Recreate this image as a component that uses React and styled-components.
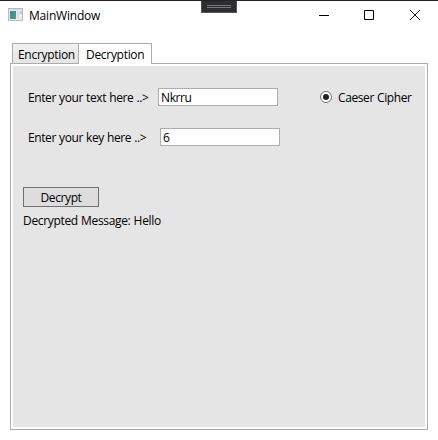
import React from "react";
import styled, { createGlobalStyle } from "styled-components";

const GlobalStyle = createGlobalStyle`
  * { box-sizing: border-box; }
  body {
    margin: 0;
    background: #fff;
    font: 12px/16px "Open Sans", "Noto Sans", sans-serif;
    color: #000;
  }
`;

const Window = styled.div`
  position: relative;
  width: 438px;
  height: 440px;
  overflow: hidden;
  background: #fff;
  border-top: 1px solid #222;
`;

const DebugHandle = styled.div`
  position: absolute;
  top: -1px;
  left: 201px;
  width: 36px;
  height: 13px;
  display: flex;
  flex-direction: column;
  gap: 1px;
  padding: 4px 5px;
  background: #2d2d30;
  border: 1px solid #555558;
`;

const Grip = styled.span`
  height: 1px;
  background: #77777a;
`;

const TitleBar = styled.header`
  display: flex;
  height: 29px;
  padding: 7px 0 0 8px;
`;

const Text = styled.span`
  display: block;
  white-space: pre;
  letter-spacing: ${(p) => p.$track ?? -0.4}px;
  word-spacing: 0.4px;
`;

const Title = styled(Text)`
  flex: none;
  width: 289px;
  margin-left: 6px;
`;

const Caption = styled.svg`
  flex: none;
  width: 12px;
  height: 12px;
  margin: 1px 33px 0 0;
`;

const TabStrip = styled.nav`
  display: flex;
  height: 21px;
  margin: 13px 0 -1px 12px;
  position: relative;
`;

const Tab = styled.button`
  width: ${(p) => p.$width}px;
  height: ${(p) => (p.$active ? 21 : 20)}px;
  padding: 2px 0 0 ${(p) => (p.$active ? 7 : 5)}px;
  border: 1px solid #acacac;
  border-bottom: 0;
  border-left-width: ${(p) => (p.$active ? 0 : 1)}px;
  background: ${(p) => (p.$active ? "#fff" : "linear-gradient(#f0f0f0, #e5e5e5)")};
  font: inherit;
  color: inherit;
  text-align: left;
`;

const Pane = styled.main`
  width: 418px;
  height: 367px;
  margin-left: 10px;
  padding: 2px;
  border: 1px solid #acacac;
`;

const Content = styled.div`
  height: 361px;
  padding: 22px 0 0 10px;
  background: #e5e5e5;
`;

const Row = styled.div`
  display: flex;
  height: 18px;
  margin-bottom: 22px;
`;

const FieldLabel = styled(Text)`
  width: ${(p) => p.$width}px;
  padding: 2px 0 0 5px;
`;

const Field = styled.div`
  width: 120px;
  height: 18px;
  padding: 1px 2px;
  border: 1px solid #abadb3;
  background: #fff;
`;

const Radio = styled.label`
  display: flex;
  gap: 6px;
  margin-left: 42px;
  padding-top: 2px;
`;

const RadioDot = styled.svg`
  width: 12px;
  height: 12px;
  margin-top: 1px;
`;

const Button = styled.button`
  display: flex;
  justify-content: center;
  width: 76px;
  height: 20px;
  margin: 41px 0 6px;
  padding: 2px 0 0;
  border: 1px solid #707070;
  background: #ddd;
  font: inherit;
  color: inherit;
`;

const AppIcon = styled.svg`
  flex: none;
  width: 15px;
  height: 13px;
`;

export default function App() {
  return (
    <>
      <GlobalStyle />
      <Window>
        <TitleBar>
          <AppIcon viewBox="0 0 15 13" shapeRendering="crispEdges">
            <defs>
              <linearGradient id="screen" x1="0" y1="0" x2="1" y2="1">
                <stop offset="0" stopColor="#4a80a8" />
                <stop offset="1" stopColor="#43a878" />
              </linearGradient>
            </defs>
            <rect width="15" height="13" fill="#b8bcc2" />
            <rect x="1" y="1" width="13" height="1" fill="#d5d8dc" />
            <rect x="1" y="2" width="13" height="10" fill="#e9ebee" />
            <rect x="2" y="3" width="6" height="8" fill="url(#screen)" />
            <rect x="9" y="3" width="2" height="8" fill="#dcdde0" />
            <rect x="12" y="3" width="2" height="3" fill="#a9d8c8" />
          </AppIcon>
          <Title $track={-0.2}>MainWindow</Title>
          <Caption viewBox="0 0 12 12">
            <path d="M1 6.5h10" stroke="#000" />
          </Caption>
          <Caption viewBox="0 0 12 12">
            <path d="M1.5 1.5h9v9h-9z" fill="none" stroke="#000" />
          </Caption>
          <Caption viewBox="0 0 12 12">
            <path d="M2 1l10 10M12 1L2 11" stroke="#000" strokeWidth="0.9" />
          </Caption>
        </TitleBar>
        <DebugHandle>
          <Grip />
          <Grip />
        </DebugHandle>
        <TabStrip>
          <Tab $width={67}>
            <Text $track={-0.3}>Encryption</Text>
          </Tab>
          <Tab $width={73} $active>
            <Text $track={-0.3}>Decryption</Text>
          </Tab>
        </TabStrip>
        <Pane>
          <Content>
            <Row>
              <FieldLabel $width={135}>{"Enter your text here ..>"}</FieldLabel>
              <Field>
                <Text>Nkrru</Text>
              </Field>
              <Radio>
                <RadioDot viewBox="0 0 12 12">
                  <circle cx="6" cy="6" r="5.5" fill="#fff" stroke="#707070" />
                  <circle cx="6" cy="6" r="3" fill="#212121" />
                </RadioDot>
                <Text>Caeser Cipher</Text>
              </Radio>
            </Row>
            <Row>
              <FieldLabel $width={137}>{"Enter your key here ..>"}</FieldLabel>
              <Field>
                <Text>6</Text>
              </Field>
            </Row>
            <Button>
              <Text>Decrypt</Text>
            </Button>
            <Text $track={-0.33}>Decrypted Message: Hello</Text>
          </Content>
        </Pane>
      </Window>
    </>
  );
}
